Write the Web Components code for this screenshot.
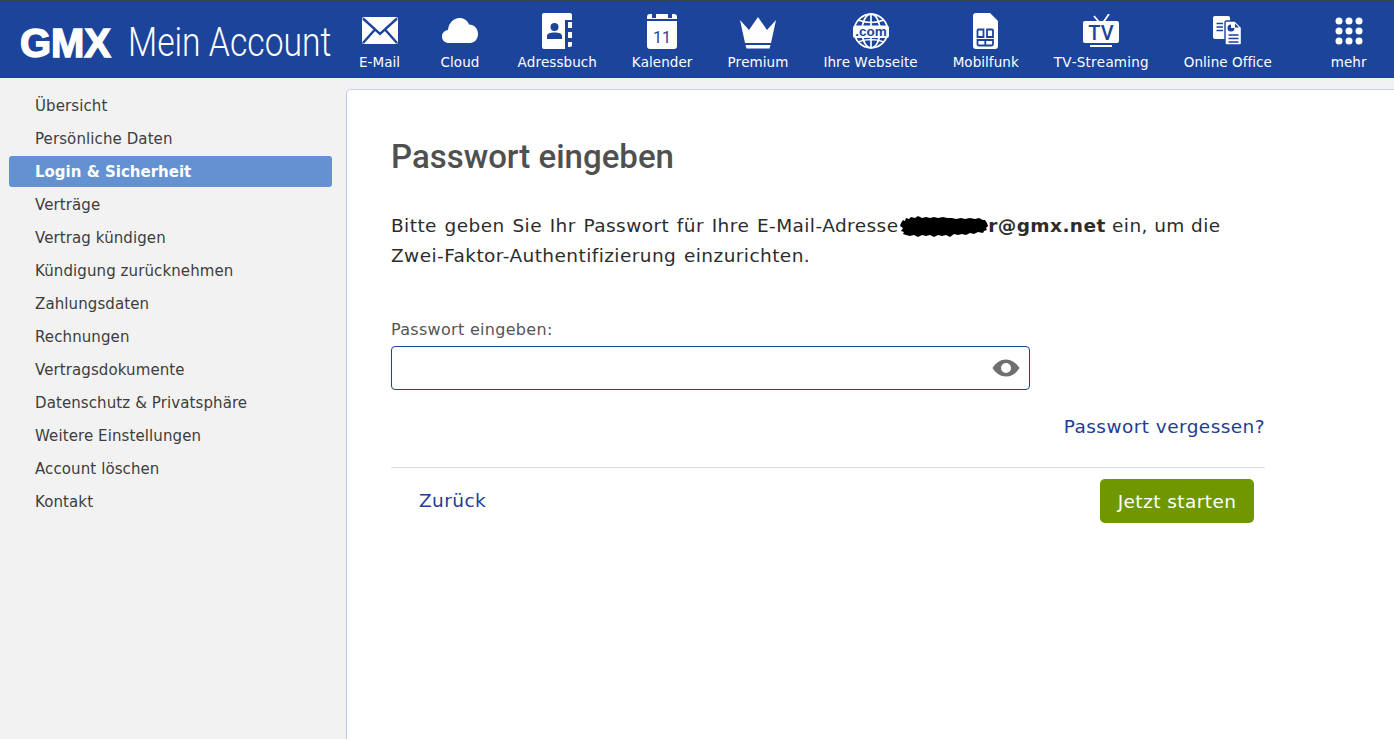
<!DOCTYPE html>
<html lang="de">
<head>
<meta charset="utf-8">
<title>GMX Mein Account</title>
<style>
	html, body { margin: 0; height: 100%; }
	body {
		font-family: "DejaVu Sans", Verdana, sans-serif;
		background-color: #f2f2f2;
		overflow: hidden;
	}
</style>
</head>
<body>
<gmx-page>
	<gmx-header slot="header">
		<gmx-nav-item label="E-Mail" style="min-width:81px">
			<svg width="36" height="28" viewBox="0 0 36 28"><rect x="0" y="0" width="36" height="27" rx="2" fill="#fff"/><path d="M1 1.500 18 17 35 1.500M1 26 13 12.500M35 26 23 12.500" fill="none" stroke="#1c449b" stroke-width="2.400"/></svg>
		</gmx-nav-item>
		<gmx-nav-item label="Cloud" style="min-width:80px">
			<svg width="36" height="26" viewBox="0 0 36 26"><path d="M7 25C3 25 0 22.500 0 18.500 0 15 2.500 12.500 6 12 6.500 5 11.500 0 17.500 0 22 0 25.500 2.500 27 6.500 32 6.500 36 10.500 36 16 36 21 32.500 25 28 25Z" fill="#fff"/></svg>
		</gmx-nav-item>
		<gmx-nav-item label="Adressbuch">
			<svg width="30" height="36" viewBox="0 0 30 36"><path d="M2 0H28A2 2 0 0 1 30 2V7H23V36H2A2 2 0 0 1 0 34V2A2 2 0 0 1 2 0Z" fill="#fff"/><path d="M26 9H30V15H26ZM26 19H30V25H26ZM26 29H30V32A2 2 0 0 1 28 34H26Z" fill="#fff"/><circle cx="12.500" cy="14" r="4" fill="#1c449b"/><path d="M5 26V23C5 20.500 8 19.500 12.500 19.500S20 20.500 20 23V26Z" fill="#1c449b"/></svg>
		</gmx-nav-item>
		<gmx-nav-item label="Kalender">
			<svg width="30" height="36" viewBox="0 0 30 36"><path d="M3 1H5V5H9V1H21V5H25V1H27A3 3 0 0 1 30 4V6H0V4A3 3 0 0 1 3 1Z" fill="#fff"/><path d="M0 8H30V33A3 3 0 0 1 27 36H3A3 3 0 0 1 0 33Z" fill="#fff"/><text x="15" y="30" text-anchor="middle" font-family="Roboto, sans-serif" font-size="16" fill="#33408f">11</text></svg>
		</gmx-nav-item>
		<gmx-nav-item label="Premium">
			<svg width="36" height="32" viewBox="0 0 36 32" style="margin-top:3px"><path d="M0 3 9 13 18 0 27 13 36 3 31 26H5Z" fill="#fff"/><path d="M5.500 28H30.500L29.500 31.500H6.500Z" fill="#fff"/></svg>
		</gmx-nav-item>
		<gmx-nav-item label="Ihre Webseite">
			<svg width="36" height="36" viewBox="0 0 36 36"><g fill="none" stroke="#fff" stroke-width="1.700"><circle cx="18" cy="18" r="16.800"/><ellipse cx="18" cy="18" rx="9" ry="16.800"/><path d="M18 1V35M5 7Q18 12 31 7M5 29Q18 24 31 29"/></g><rect x="0" y="12.500" width="36" height="12.500" rx="2.500" fill="#fff"/><text x="18" y="23" text-anchor="middle" font-family="Liberation Sans, sans-serif" font-weight="700" font-size="13.500" fill="#1c449b">.com</text></svg>
		</gmx-nav-item>
		<gmx-nav-item label="Mobilfunk">
			<svg width="25" height="36" viewBox="0 0 25 36"><path d="M3 0H17L25 8V33A3 3 0 0 1 22 36H3A3 3 0 0 1 0 33V3A3 3 0 0 1 3 0Z" fill="#fff"/><path d="M5.500 16.500H10.500V24H4.500V17.500A1 1 0 0 1 5.500 16.500ZM14 16.500H19A1 1 0 0 1 20 17.500V24H14ZM4.500 27H20V31A1.500 1.500 0 0 1 18.500 32.500H6A1.500 1.500 0 0 1 4.500 31ZM12.300 27V32.500" fill="none" stroke="#1c449b" stroke-width="1.800"/></svg>
		</gmx-nav-item>
		<gmx-nav-item label="TV-Streaming" style="letter-spacing:0.22px">
			<svg width="36" height="34" viewBox="0 0 36 34"><path d="M11 2 16 8M26 0 20.500 8" stroke="#fff" stroke-width="1.800" fill="none"/><rect x="0" y="7" width="36" height="22" rx="2" fill="#fff"/><path d="M7 31H29V33H7Z" fill="#fff"/><text x="18" y="26" text-anchor="middle" font-family="Roboto, sans-serif" font-weight="500" font-size="20" fill="#1c449b">TV</text></svg>
		</gmx-nav-item>
		<gmx-nav-item label="Online Office">
			<svg width="29" height="30" viewBox="0 0 29 30"><rect x="0" y="0" width="17" height="23" rx="2" fill="#fff"/><path d="M3.500 7.500H10M3.500 11H10M3.500 14.500H10" stroke="#1c449b" stroke-width="1.500"/><path d="M13.500 5H22L28.500 11.500V27.500A1.500 1.500 0 0 1 27 29H13.500A1.500 1.500 0 0 1 12 27.500V6.500A1.500 1.500 0 0 1 13.500 5Z" fill="#fff" stroke="#1c449b" stroke-width="1.400"/><path d="M18 8.500A3.500 3.500 0 1 0 21.500 12H18Z" fill="#1c449b"/><path d="M22 7.500 26 11.500H22Z" fill="#1c449b"/><path d="M15.500 19H25.500M15.500 22.500H25.500M15.500 26H25.500" stroke="#1c449b" stroke-width="1.500"/></svg>
		</gmx-nav-item>
		<gmx-nav-item label="mehr" style="margin-left:auto">
			<svg width="28" height="28" viewBox="0 0 28 28" fill="#fff"><circle cx="4" cy="4" r="3.500"/><circle cx="14" cy="4" r="3.500"/><circle cx="24" cy="4" r="3.500"/><circle cx="4" cy="14" r="3.500"/><circle cx="14" cy="14" r="3.500"/><circle cx="24" cy="14" r="3.500"/><circle cx="4" cy="24" r="3.500"/><circle cx="14" cy="24" r="3.500"/><circle cx="24" cy="24" r="3.500"/></svg>
		</gmx-nav-item>
	</gmx-header>

	<gmx-sidebar slot="sidebar">
		<gmx-side-item>Übersicht</gmx-side-item>
		<gmx-side-item>Persönliche Daten</gmx-side-item>
		<gmx-side-item active>Login &amp; Sicherheit</gmx-side-item>
		<gmx-side-item>Verträge</gmx-side-item>
		<gmx-side-item>Vertrag kündigen</gmx-side-item>
		<gmx-side-item>Kündigung zurücknehmen</gmx-side-item>
		<gmx-side-item>Zahlungsdaten</gmx-side-item>
		<gmx-side-item>Rechnungen</gmx-side-item>
		<gmx-side-item>Vertragsdokumente</gmx-side-item>
		<gmx-side-item>Datenschutz &amp; Privatsphäre</gmx-side-item>
		<gmx-side-item>Weitere Einstellungen</gmx-side-item>
		<gmx-side-item>Account löschen</gmx-side-item>
		<gmx-side-item>Kontakt</gmx-side-item>
	</gmx-sidebar>

	<gmx-password-panel></gmx-password-panel>
</gmx-page>

<script>
const pageTemplate = document.createElement("template");
pageTemplate.innerHTML = `
<style>
	:host {
		display: grid;
		grid-template-columns: 346px 1fr;
		grid-template-rows: 78px 1fr;
		height: 100vh;
	}
	::slotted([slot="header"]) { grid-column: 1 / 3; }
</style>
<slot name="header"></slot>
<slot name="sidebar"></slot>
<slot></slot>`;

class GmxPage extends HTMLElement {
	constructor() {
		super();
		this.attachShadow({ mode: "open" }).append(pageTemplate.content.cloneNode(true));
	}
}
customElements.define("gmx-page", GmxPage);

const headerTemplate = document.createElement("template");
headerTemplate.innerHTML = `
<style>
	:host {
		display: flex;
		box-sizing: border-box;
		height: 78px;
		background-color: #1c449b;
		border-top: 1px solid #3a3f4b;
		padding-right: 10px;
		color: #fff;
	}
	.logo {
		flex: 0 0 339px;
		min-width: 0;
		display: flex;
		align-items: center;
		padding: 0 0 0 20px;
		box-sizing: border-box;
		white-space: nowrap;
		height: 84px;
	}
	.gmx {
		font: 700 40px/1 "Liberation Sans", sans-serif;
		-webkit-text-stroke: 1.4px #fff;
		letter-spacing: -0.1px;
		flex: 0 0 108px;
	}
	.title {
		font: 300 40px/1 Roboto, sans-serif;
		transform: scaleX(0.842);
		transform-origin: left center;
	}
	nav {
		flex: 1;
		display: flex;
	}
</style>
<div class="logo"><span class="gmx">GMX</span><span class="title">Mein Account</span></div>
<nav><slot></slot></nav>`;

class GmxHeader extends HTMLElement {
	constructor() {
		super();
		this.attachShadow({ mode: "open" }).append(headerTemplate.content.cloneNode(true));
	}
}
customElements.define("gmx-header", GmxHeader);

const navItemTemplate = document.createElement("template");
navItemTemplate.innerHTML = `
<style>
	:host {
		display: flex;
		flex-direction: column;
		align-items: center;
		box-sizing: border-box;
		padding: 12px 17.5px 0;
		letter-spacing: 0.05px;
	}
	.icon {
		height: 36px;
		display: flex;
		align-items: center;
		justify-content: center;
	}
	.label {
		margin-top: 3px;
		font-size: 13.5px;
		line-height: 20px;
		white-space: nowrap;
		font-kerning: none;
	}
</style>
<div class="icon"><slot></slot></div>
<div class="label"></div>`;

class GmxNavItem extends HTMLElement {
	constructor() {
		super();
		this.attachShadow({ mode: "open" }).append(navItemTemplate.content.cloneNode(true));
	}

	connectedCallback() {
		this.shadowRoot.querySelector(".label").textContent = this.getAttribute("label");
	}
}
customElements.define("gmx-nav-item", GmxNavItem);

const sidebarTemplate = document.createElement("template");
sidebarTemplate.innerHTML = `
<style>
	:host {
		display: block;
		padding: 12px 14px 0 9px;
	}
</style>
<slot></slot>`;

class GmxSidebar extends HTMLElement {
	constructor() {
		super();
		this.attachShadow({ mode: "open" }).append(sidebarTemplate.content.cloneNode(true));
	}
}
customElements.define("gmx-sidebar", GmxSidebar);

const sideItemTemplate = document.createElement("template");
sideItemTemplate.innerHTML = `
<style>
	:host {
		display: block;
		height: 31px;
		margin-bottom: 2px;
		padding-left: 26px;
		border-radius: 3px;
		font-size: 15px;
		line-height: 33px;
		color: #3d3d3d;
		white-space: nowrap;
		letter-spacing: 0.1px;
	}
	:host([active]) {
		background-color: #6391d1;
		color: #fff;
		font-weight: 700;
		letter-spacing: 0;
	}
</style>
<slot></slot>`;

class GmxSideItem extends HTMLElement {
	constructor() {
		super();
		this.attachShadow({ mode: "open" }).append(sideItemTemplate.content.cloneNode(true));
	}
}
customElements.define("gmx-side-item", GmxSideItem);

const fieldTemplate = document.createElement("template");
fieldTemplate.innerHTML = `
<style>
	:host {
		display: block;
		width: 639px;
		word-spacing: 0;
	}
	label {
		display: block;
		font-size: 16px;
		line-height: 20px;
		color: #555;
		margin-bottom: 6px;
		letter-spacing: 0.3px;
	}
	.box {
		position: relative;
		display: block;
	}
	input {
		display: block;
		box-sizing: border-box;
		width: 100%;
		height: 44px;
		border: 1px solid #1c449b;
		border-radius: 4px;
		outline: none;
		background: #fff;
		padding: 0 48px 0 10px;
	}
	svg {
		position: absolute;
		right: 10px;
		top: 13px;
	}
</style>
<label for="pw"><slot></slot></label>
<div class="box">
	<input id="pw" type="password">
	<svg width="28" height="18" viewBox="0 0 28 18"><path fill-rule="evenodd" d="M0.500 9C4 3.500 8.500 0.500 14 0.500S24 3.500 27.500 9C24 14.500 19.500 17.500 14 17.500S4 14.500 0.500 9ZM14 4A5 5 0 1 0 14 14 5 5 0 1 0 14 4Z" fill="#6f6f6f"/></svg>
</div>`;

class GmxPasswordField extends HTMLElement {
	constructor() {
		super();
		this.attachShadow({ mode: "open" }).append(fieldTemplate.content.cloneNode(true));
	}
}
customElements.define("gmx-password-field", GmxPasswordField);

const panelTemplate = document.createElement("template");
panelTemplate.innerHTML = `
<style>
	:host {
		display: block;
		box-sizing: border-box;
		margin-top: 11px;
		padding: 47px 129px 0 44px;
		background-color: #fff;
		border-top: 1px solid #c4d6ea;
		border-left: 1px solid #b5cde6;
		border-top-left-radius: 5px;
		font-size: 18.5px;
		letter-spacing: 0.43px;
	}
	h1 {
		margin: 0 0 34px;
		font: 500 33px/40px Roboto, sans-serif;
		letter-spacing: 0;
		color: #505050;
	}
	p {
		margin: 0 0 49px;
		line-height: 30px;
		color: #2c2c2c;
		white-space: nowrap;
		word-spacing: 1.4px;
	}
	.blot {
		display: inline-block;
		vertical-align: -6px;
		margin-left: -6px;
	}
	.tail {
		word-spacing: 0;
	}
	.forgot {
		margin-top: 27px;
		text-align: right;
		line-height: 20px;
	}
	a {
		color: #1f3c94;
		text-decoration: none;
	}
	.footer {
		display: flex;
		align-items: center;
		justify-content: space-between;
		margin-top: 30px;
		padding: 11px 11px 0 28px;
		border-top: 1px solid #dcdcdc;
		line-height: 20px;
	}
	button {
		width: 154px;
		height: 44px;
		padding: 0;
		border: 0;
		border-radius: 5px;
		background-color: #6f9800;
		color: #fff;
		font: 18.5px "DejaVu Sans", Verdana, sans-serif;
		letter-spacing: 0.43px;
	}
</style>
<h1>Passwort eingeben</h1>
<p>Bitte geben Sie Ihr Passwort für Ihre E-Mail-Adresse <svg class="blot" width="88" height="22" viewBox="0 0 88 22"><path d="M1 7 3 4 5 5 6 2 9 3 11 1 15 2 18 0 22 2 26 1 30 2 34 1 38 2 43 1 47 2 52 2 56 3 61 2 65 3 70 2 75 3 79 2 83 4 85 4 87 7 88 10 86 12 87 14 84 15 83 17 78 16 74 18 70 17 66 19 62 18 58 19 54 18 50 21 46 19 42 20 38 19 34 21 30 19 26 20 22 19 18 21 14 19 10 20 6 19 3 18 4 16 1 15 3 12 0 10Z" fill="#000"/></svg><span class="tail"><b>r@gmx.net</b> ein, um die</span><br>Zwei-Faktor-Authentifizierung einzurichten.</p>
<gmx-password-field>Passwort eingeben:</gmx-password-field>
<div class="forgot"><a href="#">Passwort vergessen?</a></div>
<div class="footer">
	<a href="#">Zurück</a>
	<button type="button">Jetzt starten</button>
</div>`;

class GmxPasswordPanel extends HTMLElement {
	constructor() {
		super();
		this.attachShadow({ mode: "open" }).append(panelTemplate.content.cloneNode(true));
	}
}
customElements.define("gmx-password-panel", GmxPasswordPanel);
</script>
</body>
</html>
